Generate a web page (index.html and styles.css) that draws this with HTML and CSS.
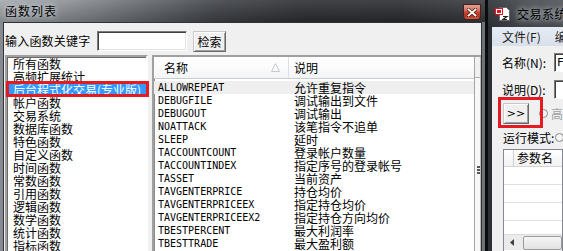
FILE: index.html
```html
<!DOCTYPE html>
<html>
<head>
    <title>函数列表</title>
    <link rel="stylesheet" href="styles.css">
</head>
<body>
    <div class="desk">
        <div class="dlg">
            <div class="dlg-title">
                <span class="cap">函数列表</span>
                <span class="close-btn">
                    <svg width="10" height="9" viewBox="0 0 10 9">
                        <path d="M1.5 1.5 L8.5 7.5 M8.5 1.5 L1.5 7.5" stroke="#5a1d14" stroke-width="3.4" stroke-linecap="square"/>
                        <path d="M1.5 1.5 L8.5 7.5 M8.5 1.5 L1.5 7.5" stroke="#fff" stroke-width="1.8" stroke-linecap="square"/>
                    </svg>
                </span>
            </div>
            <div class="dlg-frame">
                <div class="client">
                    <div class="search-row">
                        <label for="kw">输入函数关键字</label>
                        <input type="text" id="kw" class="kw">
                        <button class="btn">检索</button>
                    </div>
                    <div class="lists">
                        <ul class="cat-list">
                            <li>所有函数</li>
                            <li>高频扩展统计</li>
                            <li class="sel">后台程式化交易(专业版)</li>
                            <li>帐户函数</li>
                            <li>交易系统</li>
                            <li>数据库函数</li>
                            <li>特色函数</li>
                            <li>自定义函数</li>
                            <li>时间函数</li>
                            <li>常数函数</li>
                            <li>引用函数</li>
                            <li>逻辑函数</li>
                            <li>数学函数</li>
                            <li>统计函数</li>
                            <li>指标函数</li>
                        </ul>
                        <div class="fn-list">
                            <div class="fn-main">
                                <div class="fn-head">
                                    <div class="h-name">
                                        <span>名称</span>
                                        <svg width="9" height="9" viewBox="0 0 9 9"><path d="M4.5 0.5 L8.5 8.5 L0.5 8.5 Z" fill="none" stroke="#c4c7cc"/></svg>
                                    </div>
                                    <div class="h-desc">说明</div>
                                </div>
                                <div class="fn-rows">
                                    <div class="row cur"><span class="c-name">ALLOWREPEAT</span><span class="c-desc">允许重复指令</span></div>
                                    <div class="row"><span class="c-name">DEBUGFILE</span><span class="c-desc">调试输出到文件</span></div>
                                    <div class="row"><span class="c-name">DEBUGOUT</span><span class="c-desc">调试输出</span></div>
                                    <div class="row"><span class="c-name">NOATTACK</span><span class="c-desc">该笔指令不追单</span></div>
                                    <div class="row"><span class="c-name">SLEEP</span><span class="c-desc">延时</span></div>
                                    <div class="row"><span class="c-name">TACCOUNTCOUNT</span><span class="c-desc">登录帐户数量</span></div>
                                    <div class="row"><span class="c-name">TACCOUNTINDEX</span><span class="c-desc">指定序号的登录帐号</span></div>
                                    <div class="row"><span class="c-name">TASSET</span><span class="c-desc">当前资产</span></div>
                                    <div class="row"><span class="c-name">TAVGENTERPRICE</span><span class="c-desc">持仓均价</span></div>
                                    <div class="row"><span class="c-name">TAVGENTERPRICEEX</span><span class="c-desc">指定持仓均价</span></div>
                                    <div class="row"><span class="c-name">TAVGENTERPRICEEX2</span><span class="c-desc">指定持仓方向均价</span></div>
                                    <div class="row"><span class="c-name">TBESTPERCENT</span><span class="c-desc">最大利润率</span></div>
                                    <div class="row"><span class="c-name">TBESTTRADE</span><span class="c-desc">最大盈利额</span></div>
                                </div>
                            </div>
                            <div class="vscroll">
                                <div class="vs-top"></div>
                                <div class="vs-grip"><i></i><i></i><i></i></div>
                            </div>
                        </div>
                    </div>
                </div>
            </div>
        </div>

        <div class="gap"></div>

        <div class="win2">
            <div class="win2-title">
                <svg class="app-icon" width="16" height="16" viewBox="0 0 16 16">
                    <path d="M4.5 1.5 H11.5 L14.5 4.5 V14.5 H4.5 Z" fill="#fff" stroke="#6a6a6a"/>
                    <rect x="0.5" y="2.5" width="7" height="6" fill="#fff" stroke="#e0141c"/>
                    <rect x="2" y="4" width="4" height="3" fill="#e0141c"/>
                    <path d="M8 10.5 H12 L8 13.5 H12" fill="none" stroke="#222" stroke-width="1.2"/>
                </svg>
                <span class="cap2">交易系统</span>
            </div>
            <div class="win2-frame">
                <div class="menubar">
                    <span>文件(F)</span>
                    <span>编辑(E)</span>
                </div>
                <div class="form">
                    <div class="f-row">
                        <span class="f-label">名称(N):</span>
                        <span class="f-input">F</span>
                    </div>
                    <div class="f-row second">
                        <span class="f-label">说明(D):</span>
                        <span class="f-input"></span>
                    </div>
                    <div class="b-row">
                        <button class="btn more">&gt;&gt;</button>
                        <span class="radio"></span>
                        <span class="dim">高</span>
                    </div>
                    <div class="m-row">
                        <span>运行模式:</span>
                        <span class="radio"></span>
                    </div>
                    <div class="params">
                        <div class="p-head">
                            <span class="p-idx"></span>
                            <span class="p-col">参数名</span>
                        </div>
                        <div class="p-row"></div>
                        <div class="p-row"></div>
                        <div class="p-row"></div>
                        <div class="hscroll">
                            <span class="hs-arrow">
                                <svg width="4" height="7" viewBox="0 0 4 7"><path d="M4 0 L0 3.5 L4 7 Z" fill="#404040"/></svg>
                            </span>
                            <span class="hs-thumb"></span>
                        </div>
                    </div>
                </div>
            </div>
        </div>
    </div>

    <div class="mark mark-cat"></div>
    <div class="mark mark-btn"></div>
</body>
</html>
```

FILE: styles.css
```css
* {
    box-sizing: border-box;
}
body {
    margin: 0;
    width: 563px;
    height: 251px;
    overflow: hidden;
    position: relative;
    background: #0e0f11;
    font-family: "Noto Sans CJK SC", sans-serif;
    font-size: 12px;
    color: #000;
}
.desk {
    display: flex;
    height: 251px;
}

/* main dialog */
.dlg {
    width: 485px;
    flex: none;
    display: flex;
    flex-direction: column;
}
.dlg-title {
    height: 22px;
    flex: none;
    display: flex;
    justify-content: space-between;
    align-items: flex-start;
    padding: 0 4px 0 5px;
    background:
        linear-gradient(180deg, rgba(255,255,255,0.10), rgba(0,0,0,0.20)),
        linear-gradient(90deg, #a4a9af 0, #90959b 60px, #686d73 135px, #404348 215px, #2d2f33 300px, #2b2d31 400px, #393b3f 485px);
}
.cap {
    line-height: 22px;
    letter-spacing: 1px;
    text-shadow: 0 0 5px rgba(235,240,245,0.8), 0 0 9px rgba(220,225,230,0.6);
}
.close-btn {
    margin-top: 4px;
    width: 18px;
    height: 16px;
    display: flex;
    align-items: center;
    justify-content: center;
    border: 1px solid #4a1f1a;
    border-radius: 0 0 4px 4px;
    background: linear-gradient(180deg, #e2a193 0, #d27a68 35%, #c0422e 55%, #b8341f 80%, #d0604a 100%);
}
.dlg-frame {
    flex: 1;
    display: flex;
    border-left: 3px solid #868b91;
    border-right: 5px solid #6e7379;
}
.client {
    flex: 1;
    background: #f0f0f0;
    border: 1px solid #2f3236;
    border-bottom: none;
}

.search-row {
    display: flex;
    align-items: flex-start;
    height: 21px;
    margin: 8px 0 3px 1px;
}
.search-row label {
    width: 92px;
    flex: none;
    line-height: 20px;
    letter-spacing: 0.2px;
}
.kw {
    width: 90px;
    height: 20px;
    margin: 0 6px 0 0;
    padding: 0;
    border: 1px solid;
    border-color: #7a7a7a #fff #fff #7a7a7a;
    box-shadow: inset 1px 1px #404040, inset -1px -1px #e3e3e3;
    background: #fff;
}
.btn {
    width: 33px;
    height: 21px;
    padding: 0;
    font-family: "Noto Sans CJK SC", sans-serif;
    font-size: 12px;
    color: #000;
    background: #f0f0f0;
    border: 1px solid #6a6a6a;
    border-top-color: #c8c8c8;
    border-left-color: #c8c8c8;
    box-shadow: inset 1px 1px #fff, inset -1px -1px #a0a0a0;
}

.lists {
    display: flex;
    height: 200px;
}
.cat-list {
    list-style: none;
    margin: 0 4px 0 1px;
    padding: 0;
    width: 143px;
    flex: none;
    background: #fff;
    border: 2px solid;
    border-color: #a0a0a0 #fff #fff #a0a0a0;
    box-shadow: inset 1px 1px #696969;
}
.cat-list li {
    height: 13px;
    line-height: 13px;
    padding-left: 6px;
    white-space: nowrap;
}
.cat-list li.sel {
    background: #3399ff;
    color: #fff;
}

.fn-list {
    flex: 1;
    display: flex;
    background: #fff;
    border-top: 2px solid #a0a0a0;
    border-left: 2px solid #a0a0a0;
    box-shadow: inset 1px 1px #8c8c8c;
}
.fn-main {
    width: 320px;
    flex: none;
}
.fn-head {
    display: flex;
    height: 22px;
    border-bottom: 1px solid #c9cbce;
    background: linear-gradient(180deg, #fff 0, #fbfbfb 50%, #f3f4f5 100%);
}
.h-name {
    width: 135px;
    display: flex;
    align-items: center;
    justify-content: space-between;
    padding: 0 8px 0 10px;
    border-right: 1px solid #dcdfe3;
}
.h-desc {
    padding-left: 5px;
    line-height: 21px;
}
.h-name span {
    line-height: 21px;
}
.fn-rows {
    padding-top: 2px;
}
.row {
    display: flex;
    height: 13px;
    line-height: 13px;
    white-space: nowrap;
}
.row.cur {
    background: #efefef;
}
.c-name {
    width: 135px;
    padding-left: 4px;
    font-family: "DejaVu Sans Mono", monospace;
    font-size: 10px;
}
.c-desc {
    padding-left: 5px;
}

.vscroll {
    flex: 1;
    border-left: 1px solid #a6a6a6;
    background: #f7f7f7;
    border-right: 1px solid #b8b8b8;
}
.vs-top {
    height: 21px;
    border-bottom: 1px solid #b0b0b0;
    background: #f0f0f0;
    position: relative;
}
.vs-grip {
    margin: 88px 0 0 2px;
    display: flex;
    flex-direction: column;
    gap: 1px;
}
.vs-grip i {
    display: block;
    width: 3px;
    height: 2px;
    background: #555;
}

.gap {
    width: 3px;
    flex: none;
    background: #0b0c0d;
}

/* second window */
.win2 {
    width: 75px;
    flex: none;
    display: flex;
    flex-direction: column;
    overflow: hidden;
}
.win2-title {
    height: 27px;
    flex: none;
    display: flex;
    align-items: center;
    padding-left: 7px;
    background:
        linear-gradient(180deg, rgba(255,255,255,0.06), rgba(0,0,0,0.15)),
        linear-gradient(90deg, #34373c, #4c5055 40px, #55595e 75px);
    white-space: nowrap;
}
.app-icon {
    flex: none;
}
.cap2 {
    margin-left: 6px;
    letter-spacing: 0.5px;
    text-shadow: 0 0 5px rgba(215,220,225,0.9), 0 0 9px rgba(200,205,210,0.7);
}
.win2-frame {
    flex: 1;
    display: flex;
    flex-direction: column;
    border-left: 4px solid #2c2f33;
    background: #f0f0f0;
}
.menubar {
    height: 19px;
    flex: none;
    display: flex;
    gap: 14px;
    padding-left: 10px;
    line-height: 19px;
    white-space: nowrap;
    color: #1e1e1e;
    background: linear-gradient(180deg, #e6ecf4, #d8e0eb);
}
.form {
    flex: 1;
    white-space: nowrap;
}
.f-row {
    display: flex;
    align-items: center;
    height: 19px;
    margin-top: 7px;
    padding-left: 10px;
}
.f-row.second {
    margin-top: 8px;
}
.f-label {
    width: 52px;
    flex: none;
}
.f-input {
    width: 60px;
    height: 19px;
    flex: none;
    padding-left: 2px;
    line-height: 17px;
    font-family: "DejaVu Sans Mono", monospace;
    font-size: 11px;
    background: #fff;
    border: 1px solid;
    border-color: #7a7a7a #fff #fff #7a7a7a;
    box-shadow: inset 1px 1px #404040;
}
.b-row {
    display: flex;
    align-items: center;
    height: 21px;
    margin-top: 4px;
    padding-left: 11px;
}
.btn.more {
    width: 32px;
    font-family: "DejaVu Sans", sans-serif;
    font-size: 11px;
}
.radio {
    width: 9px;
    height: 9px;
    flex: none;
    border: 1px solid #8a8a8a;
    border-radius: 50%;
    background: #f4f4f4;
}
.b-row .radio {
    margin-left: 10px;
}
.dim {
    margin-left: 3px;
    color: #a0a0a0;
}
.m-row {
    display: flex;
    align-items: center;
    height: 14px;
    margin-top: 6px;
    padding-left: 11px;
}
.m-row .radio {
    margin-left: 1px;
}
.params {
    height: 103px;
    margin: 5px 0 0 11px;
    display: flex;
    flex-direction: column;
    border: 1px solid #828790;
    background: #fff;
}
.p-head {
    display: flex;
    height: 17px;
    flex: none;
    border-bottom: 1px solid #d5d5d5;
    background: linear-gradient(180deg, #fff, #f2f2f2);
}
.p-idx {
    width: 10px;
    flex: none;
    border-right: 1px solid #cfcfcf;
}
.p-col {
    padding-left: 3px;
    line-height: 16px;
}
.p-row {
    height: 18px;
    flex: none;
    border-bottom: 1px solid #e0e0e0;
}
.hscroll {
    margin-top: auto;
    margin-bottom: 1px;
    height: 16px;
    display: flex;
    align-items: center;
    background: #ebebeb;
    border-top: 1px solid #dcdcdc;
}
.hs-arrow {
    width: 16px;
    flex: none;
    display: flex;
    justify-content: center;
}
.hs-thumb {
    flex: 1;
    height: 14px;
    margin-left: 3px;
    border: 1px solid #9c9c9c;
    border-radius: 2px;
    background: linear-gradient(180deg, #f6f6f6, #e2e2e2);
}

/* red call-out boxes drawn over the screenshot */
.mark {
    position: absolute;
    border: 3px solid #e31b23;
}
.mark-cat {
    left: 6px;
    top: 81px;
    width: 143px;
    height: 16px;
}
.mark-btn {
    left: 498px;
    top: 97px;
    width: 45px;
    height: 31px;
}
```
